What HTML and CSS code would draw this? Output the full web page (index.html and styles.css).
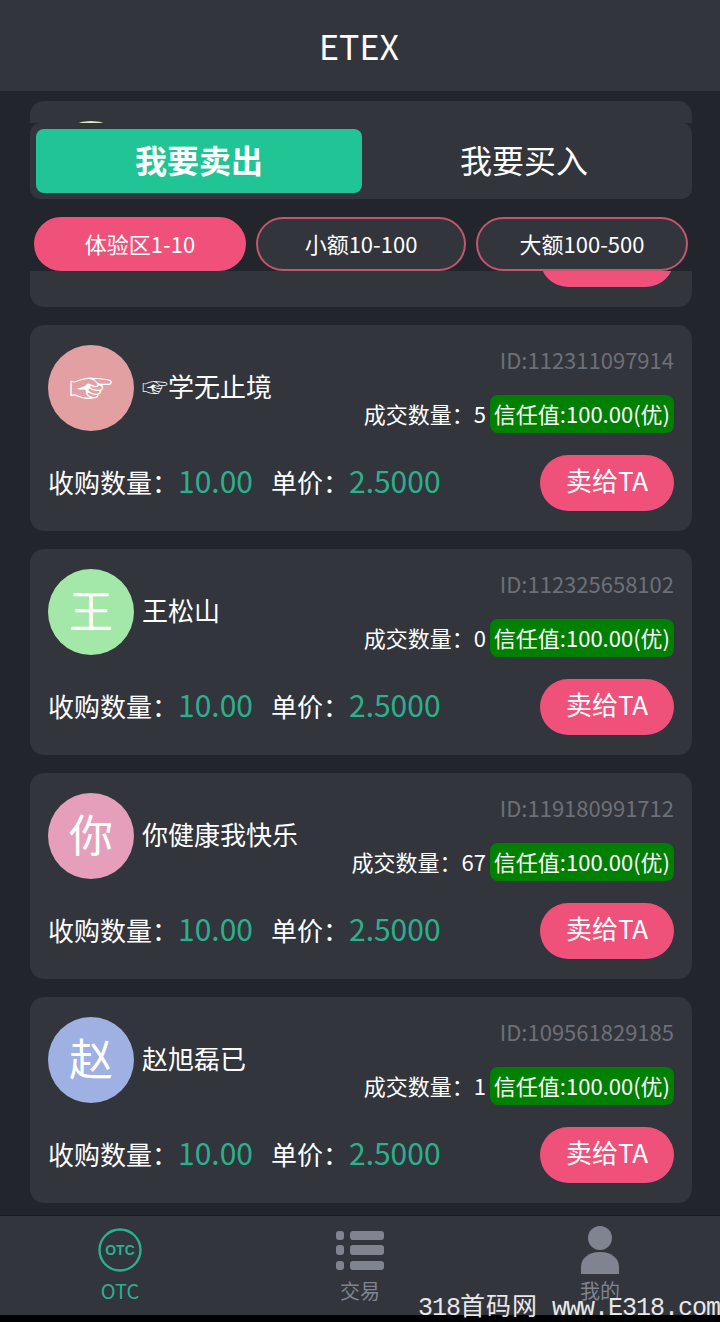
FILE: index.html
```html
<!DOCTYPE html>
<html lang="zh-CN">
<head>
    <meta charset="UTF-8">
    <meta name="viewport" content="width=device-width, initial-scale=1.0">
    <title>ETEX</title>
    <link rel="stylesheet" href="styles.css">
</head>
<body>
    <header class="top-bar">ETEX</header>

    <main class="content">
        <div class="sticky-panel">
            <div class="tabs">
                <div class="tab tab-active">我要卖出</div>
                <div class="tab">我要买入</div>
            </div>
            <div class="filters">
                <div class="pill pill-active">体验区1-10</div>
                <div class="pill">小额10-100</div>
                <div class="pill">大额100-500</div>
            </div>
        </div>

        <div class="list">
            <!-- This card has scrolled under the panel, only its edges show -->
            <div class="card">
                <div class="card-top">
                    <div class="avatar avatar-pale"></div>
                </div>
                <div class="card-bottom">
                    <div class="sell-btn"></div>
                </div>
            </div>

            <div class="card">
                <div class="card-top">
                    <div class="avatar avatar-rose">☞</div>
                    <div class="name">☞学无止境</div>
                    <div class="info">
                        <div class="user-id">ID:112311097914</div>
                        <div class="stats"><span>成交数量：5</span><span class="trust">信任值:100.00(优)</span></div>
                    </div>
                </div>
                <div class="card-bottom">
                    <div class="label">收购数量：<span class="value">10.00</span></div>
                    <div class="label price">单价：<span class="value">2.5000</span></div>
                    <div class="sell-btn">卖给TA</div>
                </div>
            </div>

            <div class="card">
                <div class="card-top">
                    <div class="avatar avatar-green">王</div>
                    <div class="name">王松山</div>
                    <div class="info">
                        <div class="user-id">ID:112325658102</div>
                        <div class="stats"><span>成交数量：0</span><span class="trust">信任值:100.00(优)</span></div>
                    </div>
                </div>
                <div class="card-bottom">
                    <div class="label">收购数量：<span class="value">10.00</span></div>
                    <div class="label price">单价：<span class="value">2.5000</span></div>
                    <div class="sell-btn">卖给TA</div>
                </div>
            </div>

            <div class="card">
                <div class="card-top">
                    <div class="avatar avatar-pink">你</div>
                    <div class="name">你健康我快乐</div>
                    <div class="info">
                        <div class="user-id">ID:119180991712</div>
                        <div class="stats"><span>成交数量：67</span><span class="trust">信任值:100.00(优)</span></div>
                    </div>
                </div>
                <div class="card-bottom">
                    <div class="label">收购数量：<span class="value">10.00</span></div>
                    <div class="label price">单价：<span class="value">2.5000</span></div>
                    <div class="sell-btn">卖给TA</div>
                </div>
            </div>

            <div class="card">
                <div class="card-top">
                    <div class="avatar avatar-blue">赵</div>
                    <div class="name">赵旭磊已</div>
                    <div class="info">
                        <div class="user-id">ID:109561829185</div>
                        <div class="stats"><span>成交数量：1</span><span class="trust">信任值:100.00(优)</span></div>
                    </div>
                </div>
                <div class="card-bottom">
                    <div class="label">收购数量：<span class="value">10.00</span></div>
                    <div class="label price">单价：<span class="value">2.5000</span></div>
                    <div class="sell-btn">卖给TA</div>
                </div>
            </div>
        </div>
    </main>

    <nav class="bottom-nav">
        <div class="nav-item nav-item-active">
            <div class="nav-slot">
                <svg width="44" height="44" viewBox="0 0 44 44">
                    <circle cx="22" cy="22" r="20.5" fill="none" stroke="#2bb08f" stroke-width="2.4"/>
                    <text x="22" y="27" text-anchor="middle" class="otc-mark">OTC</text>
                </svg>
            </div>
            <span>OTC</span>
        </div>
        <div class="nav-item">
            <div class="nav-slot">
                <svg width="50" height="44" viewBox="0 0 50 44">
                    <rect x="1" y="3" width="8" height="9" rx="3" fill="#7f8490"/>
                    <rect x="15" y="3" width="34" height="9" rx="3" fill="#7f8490"/>
                    <rect x="1" y="17" width="8" height="10" rx="3" fill="#7f8490"/>
                    <rect x="15" y="17" width="34" height="10" rx="3" fill="#7f8490"/>
                    <rect x="1" y="33" width="8" height="9" rx="3" fill="#7f8490"/>
                    <rect x="15" y="33" width="34" height="9" rx="3" fill="#7f8490"/>
                </svg>
            </div>
            <span>交易</span>
        </div>
        <div class="nav-item">
            <div class="nav-slot">
                <svg width="40" height="48" viewBox="0 0 40 48">
                    <ellipse cx="20" cy="12" rx="12" ry="12" fill="#7f8490"/>
                    <path d="M1 48V41C1 32 9 26 20 26S39 32 39 41V48Z" fill="#7f8490"/>
                </svg>
            </div>
            <span>我的</span>
        </div>
    </nav>
    <div class="black-strip"></div>

    <div class="watermark">318<span class="watermark-cjk">首码网</span> www.E318.com</div>
</body>
</html>
```

FILE: styles.css
```css
* {
    box-sizing: border-box;
}

html, body {
    margin: 0;
    height: 1322px;
    overflow: hidden;
}

body {
    position: relative;
    display: flex;
    flex-direction: column;
    width: 720px;
    background-color: #22252c;
    color: #fff;
    font-family: "Noto Sans CJK SC", "Noto Sans", sans-serif;
}

.top-bar {
    flex: 0 0 91px;
    display: flex;
    align-items: center;
    justify-content: center;
    padding-right: 2px;
    background-color: #32353c;
    font-size: 34px;
}

.content {
    position: relative;
    flex: 1;
    overflow: hidden;
}

.sticky-panel {
    position: absolute;
    top: 32px;
    left: 0;
    right: 0;
    height: 148px;
    background-color: #22252c;
    z-index: 2;
}

.tabs {
    display: flex;
    height: 76px;
    margin: 0 28px 0 30px;
    padding: 6px;
    background-color: #32353c;
    border-radius: 10px;
}

.tab {
    flex: 1;
    display: flex;
    align-items: center;
    justify-content: center;
    padding-bottom: 4px;
    border-radius: 8px;
    font-size: 32px;
}

.tab-active {
    flex: 0 0 326px;
    background-color: #21c495;
    font-weight: 700;
}

.filters {
    display: grid;
    grid-template-columns: 212px 210px 212px;
    gap: 10px;
    height: 54px;
    margin-top: 18px;
    padding-left: 34px;
}

.pill {
    display: flex;
    align-items: center;
    justify-content: center;
    padding-bottom: 2px;
    background-color: #32353c;
    border: 2px solid #c2566f;
    border-radius: 27px;
    font-size: 22px;
}

.pill-active {
    background-color: #f0517a;
    border-color: #f0517a;
}

.list {
    display: flex;
    flex-direction: column;
    gap: 18px;
    padding: 10px 28px 0 30px;
}

.card {
    height: 206px;
    padding: 20px 18px;
    background-color: #32353c;
    border-radius: 14px;
}

.card-top {
    display: flex;
    align-items: flex-start;
    height: 88px;
    margin-bottom: 22px;
}

.avatar {
    flex: 0 0 86px;
    display: flex;
    align-items: center;
    justify-content: center;
    width: 86px;
    height: 86px;
    padding-bottom: 6px;
    border-radius: 50%;
    font-size: 44px;
}

.avatar-pale {
    background-color: #e2ebb8;
}

.avatar-rose {
    background-color: #e3a0a3;
}

.avatar-green {
    background-color: #a3e8a9;
}

.avatar-pink {
    background-color: #e59fbb;
}

.avatar-blue {
    background-color: #9fb0e3;
}

.name {
    margin-left: 8px;
    font-size: 26px;
    line-height: 82px;
    white-space: nowrap;
}

.info {
    margin-left: auto;
    display: flex;
    flex-direction: column;
    align-items: flex-end;
}

.user-id {
    height: 32px;
    margin-bottom: 18px;
    color: #6d7079;
    font-size: 22px;
    line-height: 28px;
}

.stats {
    display: flex;
    align-items: flex-start;
    gap: 4px;
    height: 38px;
    line-height: 36px;
    font-size: 22px;
}

.trust {
    padding: 0 4px;
    height: 38px;
    background-color: #008000;
    border-radius: 8px;
}

.card-bottom {
    display: flex;
    align-items: center;
    height: 56px;
}

.label {
    padding-bottom: 7px;
    font-size: 26px;
    white-space: nowrap;
}

.price {
    margin-left: 18px;
}

.value {
    color: #2bb08f;
    font-size: 30px;
}

.sell-btn {
    margin-left: auto;
    display: flex;
    align-items: center;
    justify-content: center;
    width: 134px;
    height: 56px;
    padding-bottom: 7px;
    background-color: #f0517a;
    border-radius: 28px;
    font-size: 26px;
}

.bottom-nav {
    flex: 0 0 100px;
    display: grid;
    grid-template-columns: repeat(3, 240px);
    background-color: #32353c;
    border-top: 1px solid #191b20;
}

.nav-item {
    display: flex;
    flex-direction: column;
    align-items: center;
    padding-top: 10px;
    color: #7f8490;
    font-size: 20px;
    line-height: 28px;
}

.nav-slot {
    display: flex;
    align-items: center;
    justify-content: center;
    height: 48px;
    margin-bottom: 3px;
}

.nav-item-active {
    color: #2bb08f;
}

.otc-mark {
    fill: #2bb08f;
    font-family: "Liberation Sans", sans-serif;
    font-size: 14px;
    font-weight: 700;
}

.black-strip {
    flex: 0 0 7px;
    background-color: #000;
}

.watermark {
    position: absolute;
    right: 0;
    bottom: -1px;
    color: #e8e8e8;
    font-family: "Liberation Mono", "Noto Sans CJK SC", monospace;
    font-size: 25px;
    line-height: 28px;
    letter-spacing: -1px;
    white-space: nowrap;
    z-index: 3;
}

.watermark-cjk {
    letter-spacing: 1px;
}
```
